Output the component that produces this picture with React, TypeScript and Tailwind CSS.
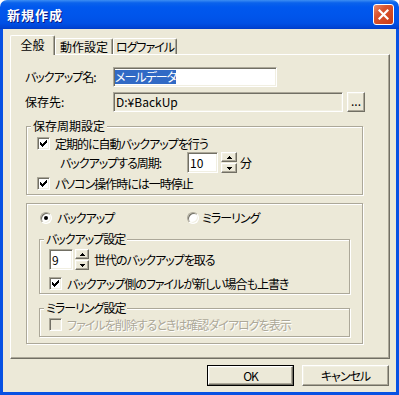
import React from "react";

const raised =
  "border border-t-white border-l-white border-r-[#716F64] border-b-[#716F64] shadow-[inset_-1px_-1px_0_#ACA899,inset_1px_1px_0_#F1EFE2] bg-[#ECE9D8]";
const sunken =
  "border border-t-[#ACA899] border-l-[#ACA899] border-r-white border-b-white shadow-[inset_1px_1px_0_#716F64,inset_-1px_-1px_0_#F1EFE2]";

const checkPath =
  "M6 0h1v1h-1z M5 1h2v1h-2z M0 2h1v1h-1z M4 2h3v1h-3z M0 3h2v1h-2z M3 3h3v1h-3z M0 4h5v1h-5z M1 5h3v1h-3z M2 6h1v1h-1z";

function Check({ checked = false, disabled = false }: { checked?: boolean; disabled?: boolean }) {
  return (
    <span
      className={`flex h-[13px] w-[13px] shrink-0 ${sunken} ${disabled ? "bg-[#ECE9D8]" : "bg-white"}`}
    >
      {checked && (
        <svg className="ml-[2px] mt-[2px]" width="7" height="7" viewBox="0 0 7 7" shapeRendering="crispEdges">
          <path d={checkPath} fill="#000" />
        </svg>
      )}
    </span>
  );
}

function Radio({ checked = false }: { checked?: boolean }) {
  return (
    <span
      className={`flex h-[12px] w-[12px] shrink-0 items-center justify-center rounded-full bg-white ${sunken}`}
    >
      {checked && <span className="h-[4px] w-[4px] rounded-full bg-black" />}
    </span>
  );
}

function Arrow({ up }: { up?: boolean }) {
  return (
    <svg width="5" height="3" viewBox="0 0 5 3" shapeRendering="crispEdges">
      <path d={up ? "M2 0h1v1h-1z M1 1h3v1h-3z M0 2h5v1h-5z" : "M0 0h5v1h-5z M1 1h3v1h-3z M2 2h1v1h-1z"} fill="#000" />
    </svg>
  );
}

function Spin({ width }: { width: string }) {
  return (
    <div className={`flex h-[21px] ${width} shrink-0 flex-col justify-between`}>
      <div className={`flex h-[10px] items-center justify-center ${raised}`}>
        <Arrow up />
      </div>
      <div className={`flex h-[10px] items-center justify-center ${raised}`}>
        <Arrow />
      </div>
    </div>
  );
}

function Group({
  label,
  className,
  children,
}: {
  label?: string;
  className: string;
  children: React.ReactNode;
}) {
  return (
    <div className={`relative border border-[#ACA899] shadow-[1px_1px_0_#fff,inset_1px_1px_0_#fff] ${className}`}>
      {label && (
        <span className="absolute left-[4px] top-[-7px] bg-[#ECE9D8] px-[2px] leading-[12px]">{label}</span>
      )}
      {children}
    </div>
  );
}

function Button({ label, isDefault }: { label: string; isDefault?: boolean }) {
  return (
    <div className={`h-[21px] w-[87px] ${isDefault ? "border border-black" : ""}`}>
      <div className={`flex h-full w-full items-center justify-center ${raised}`}>{label}</div>
    </div>
  );
}

const tab =
  "flex items-center justify-center rounded-t-[2px] border-l border-r border-t border-l-white border-t-white border-r-[#716F64] shadow-[inset_-1px_0_0_#ACA899]";

export default function App() {
  return (
    <div className="flex h-[395px] w-[399px] flex-col whitespace-nowrap text-[12px] leading-none tracking-[-1px] text-black font-['Noto_Sans_CJK_JP',sans-serif] [font-feature-settings:'palt']">
      {/* title bar */}
      <div className="flex h-[29px] shrink-0 items-center rounded-t-[7px] bg-[linear-gradient(to_bottom,#3C8EF3_0%,#0A62EC_10%,#0058EE_25%,#0055EB_55%,#0050E5_80%,#0043D3_95%,#003CC6_100%)] pl-[7px] pr-[5px]">
        <span className="text-[13px] font-bold tracking-[1px] text-white [text-shadow:1px_1px_0_#0A1883]">
          新規作成
        </span>
        <div className="ml-auto flex h-[21px] w-[21px] items-center justify-center rounded-[3px] border border-white bg-[linear-gradient(135deg,#EC8C6C_0%,#DA5530_35%,#C93A14_100%)]">
          <svg width="11" height="11" viewBox="0 0 11 11">
            <path d="M1.5 1.5 L9.5 9.5 M9.5 1.5 L1.5 9.5" stroke="#fff" strokeWidth="2.2" strokeLinecap="square" />
          </svg>
        </div>
      </div>

      {/* body */}
      <div className="flex flex-1 flex-col border-x-[3px] border-b-[3px] border-[#0751E3] bg-[#ECE9D8] pl-[7px] pr-[6px] pt-[6px]">
        {/* tabs */}
        <div className="relative z-10 flex h-[19px] items-end">
          <div className={`${tab} -mb-px h-[20px] w-[45px] bg-[#ECE9D8] pb-[2px] tracking-[0px]`}>全般</div>
          <div className={`${tab} h-[16px] w-[58px] tracking-[0px]`}>動作設定</div>
          <div className={`${tab} h-[16px] w-[64px]`}>ログファイル</div>
        </div>

        {/* tab page */}
        <div className="h-[305px] border border-l-white border-t-white border-r-[#716F64] border-b-[#716F64] pl-[14px] shadow-[inset_-1px_-1px_0_#ACA899]">
          <div className="mt-[12px] flex h-[20px] items-center">
            <span className="w-[88px]">バックアップ名:</span>
            <div className={`flex h-[20px] w-[164px] items-center bg-white pl-[1px] ${sunken}`}>
              <span className="bg-[#316AC5] py-[1px] text-white">メールデータ</span>
            </div>
          </div>
          <div className="mt-[5px] flex h-[20px] items-center">
            <span className="w-[88px] tracking-[0px]">保存先:</span>
            <div className={`flex h-[20px] w-[230px] items-center bg-[#ECE9D8] pl-[2px] tracking-[0px] ${sunken}`}>
              D:¥BackUp
            </div>
            <div className={`ml-[4px] flex h-[20px] w-[18px] items-center justify-center pb-[3px] tracking-[0px] ${raised}`}>
              ...
            </div>
          </div>

          <Group label="保存周期設定" className="ml-[1px] mt-[14px] h-[69px] w-[337px] tracking-[0px]">
            <div className="ml-[10px] mt-[10px] flex h-[13px] items-center gap-[5px] tracking-[-1px]">
              <Check checked />
              <span>定期的に自動バックアップを行う</span>
            </div>
            <div className="ml-[33px] mt-[2px] flex h-[21px] items-center tracking-[-1px]">
              <span className="w-[127px]">バックアップする周期:</span>
              <div className={`flex h-[21px] w-[31px] items-center bg-white pl-[2px] tracking-[0px] ${sunken}`}>10</div>
              <div className="ml-[3px]">
                <Spin width="w-[16px]" />
              </div>
              <span className="ml-[3px]">分</span>
            </div>
            <div className="ml-[10px] mt-[4px] flex h-[13px] items-center gap-[5px] tracking-[-1px]">
              <Check checked />
              <span>パソコン操作時には一時停止</span>
            </div>
          </Group>

          <Group className="ml-[1px] mt-[8px] h-[141px] w-[337px]">
            <div className="ml-[13px] mt-[8px] flex h-[12px] items-center">
              <div className="flex w-[147px] items-center gap-[5px]">
                <Radio checked />
                <span>バックアップ</span>
              </div>
              <div className="flex items-center gap-[3px]">
                <Radio />
                <span>ミラーリング</span>
              </div>
            </div>

            <Group label="バックアップ設定" className="ml-[12px] mt-[15px] h-[55px] w-[311px]">
              <div className="ml-[9px] mt-[9px] flex h-[21px] items-center">
                <div className={`flex h-[21px] w-[24px] items-center bg-white pl-[2px] ${sunken}`}>9</div>
                <div className="ml-[2px]">
                  <Spin width="w-[14px]" />
                </div>
                <span className="ml-[5px]">世代のバックアップを取る</span>
              </div>
              <div className="ml-[9px] mt-[7px] flex h-[13px] items-center gap-[5px]">
                <Check checked />
                <span>バックアップ側のファイルが新しい場合も上書き</span>
              </div>
            </Group>

            <Group label="ミラーリング設定" className="ml-[12px] mt-[14px] h-[29px] w-[311px]">
              <div className="ml-[9px] mt-[9px] flex h-[13px] items-center gap-[5px]">
                <Check disabled />
                <span className="text-[#ACA899] [text-shadow:1px_1px_0_#fff]">
                  ファイルを削除するときは確認ダイアログを表示
                </span>
              </div>
            </Group>
          </Group>
        </div>

        {/* buttons */}
        <div className="mt-[6px] flex justify-end gap-[8px] pr-[1px]">
          <Button label="OK" isDefault />
          <Button label="キャンセル" />
        </div>
      </div>
    </div>
  );
}
